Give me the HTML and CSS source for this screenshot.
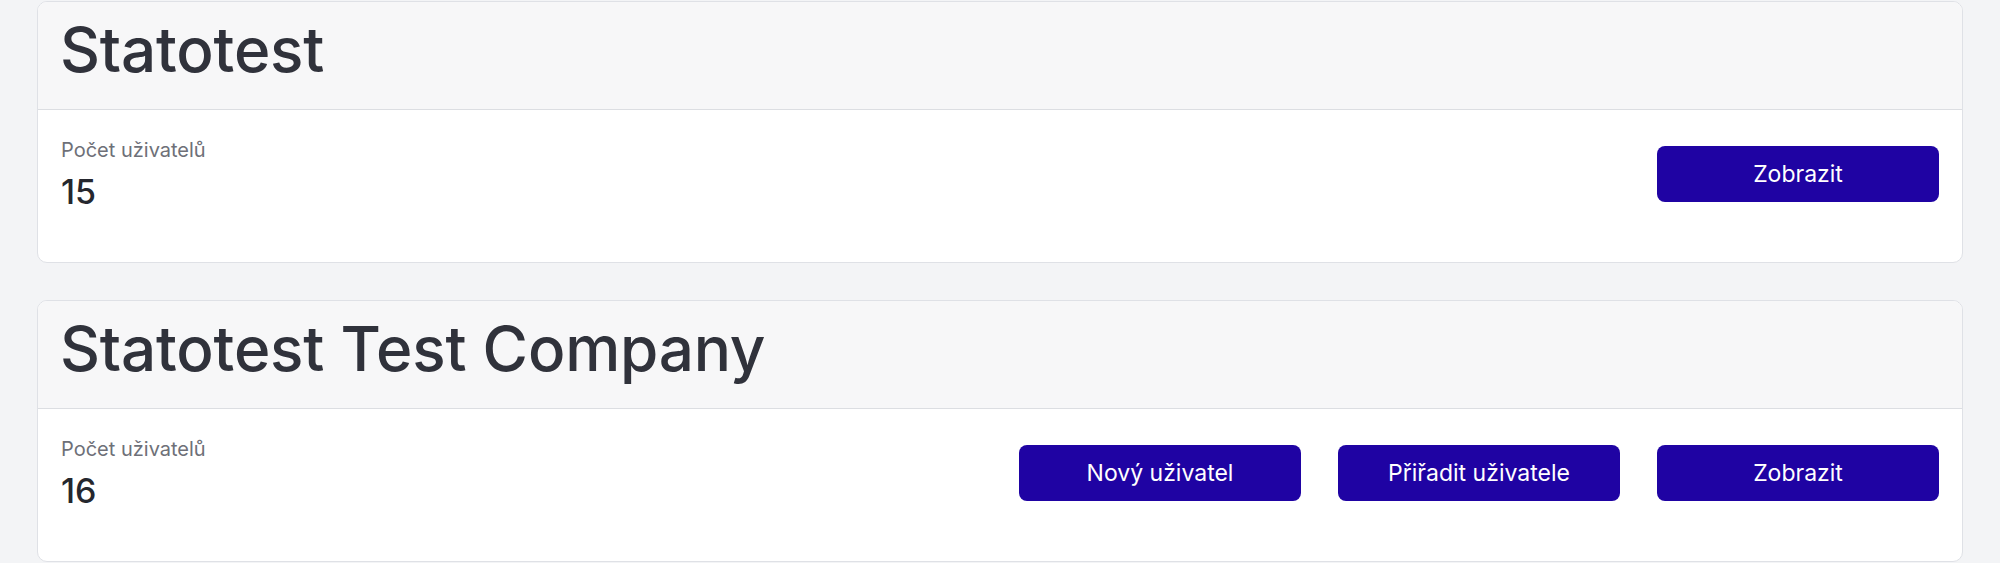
FILE: index.html
```html
<!DOCTYPE html>
<html lang="cs">
<head>
<meta charset="utf-8">
<title>Firmy</title>
<link rel="stylesheet" href="styles.css">
</head>
<body>
<main class="list">
  <section class="card">
    <header class="card-head"><h2 class="card-title">Statotest</h2></header>
    <div class="card-body">
      <div class="stat">
        <div class="stat-label">Počet uživatelů</div>
        <div class="stat-value">15</div>
      </div>
      <div class="actions">
        <button class="btn">Zobrazit</button>
      </div>
    </div>
  </section>
  <section class="card">
    <header class="card-head"><h2 class="card-title">Statotest Test Company</h2></header>
    <div class="card-body">
      <div class="stat">
        <div class="stat-label">Počet uživatelů</div>
        <div class="stat-value">16</div>
      </div>
      <div class="actions">
        <button class="btn">Nový uživatel</button>
        <button class="btn">Přiřadit uživatele</button>
        <button class="btn">Zobrazit</button>
      </div>
    </div>
  </section>
</main>
</body>
</html>
```
FILE: styles.css
```css
html, body {
  margin: 0;
  padding: 0;
  background: #f3f4f6;
  font-family: Inter, "Noto Sans", sans-serif;
}
.list {
  display: flex;
  flex-direction: column;
  gap: 37px;
  padding: 1px 37px 0 37px;
}
.card {
  background: #ffffff;
  border: 1px solid #dfe1e6;
  border-radius: 10px;
  overflow: hidden;
}
.card-head {
  background: #f7f7f8;
  border-bottom: 1px solid #dcdee2;
  padding: 10px 23px 21px 22px;
}
.card-title {
  margin: 0;
  font-size: 62px;
  line-height: 76px;
  font-weight: 500;
  color: #30323b;
  letter-spacing: -0.2px;
}
.card-body {
  display: flex;
  justify-content: space-between;
  align-items: flex-start;
  padding: 26px 23px 48px 23px;
}
.stat-label {
  font-size: 20px;
  line-height: 28px;
  color: #6e7078;
}
.stat-value {
  margin-top: 6px;
  font-size: 34px;
  line-height: 44px;
  font-weight: 500;
  color: #25272e;
}
.actions {
  display: flex;
  gap: 37px;
  margin-top: 10px;
}
.btn {
  width: 282px;
  height: 56px;
  border: 0;
  border-radius: 8px;
  background: #1f03a3;
  color: #ffffff;
  font-family: Inter, "Noto Sans", sans-serif;
  font-size: 23px;
  font-weight: 400;
  cursor: pointer;
}
```
